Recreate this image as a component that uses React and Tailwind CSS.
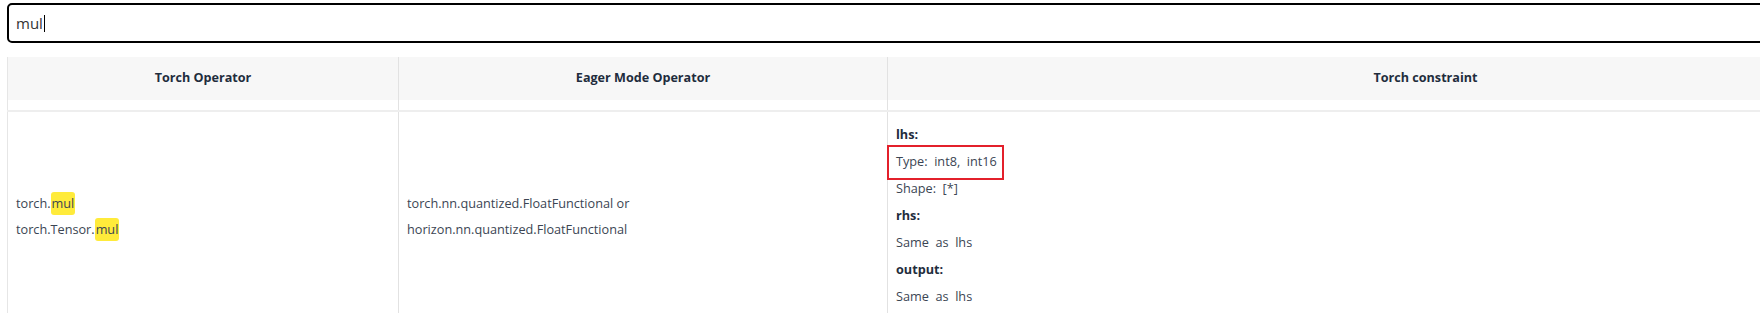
import React from 'react';

const font = { fontFamily: '"Open Sans", "Noto Sans", sans-serif' };

function Mark({ children }) {
  return (
    <span className="inline-block rounded-[3px] bg-[#ffeb3b] px-[1px] leading-[23px]">{children}</span>
  );
}

function HeaderCell({ children, first }) {
  return (
    <div className={`pb-[10px] ${first ? 'border-l border-[#e6e6e6]' : 'border-l border-[#e2e2e2]'}`}>
      <div className="flex h-[43px] items-center justify-center bg-[#f7f7f7] text-[12.6px] font-bold text-[#1f2d3d]">
        {children}
      </div>
    </div>
  );
}

export default function App() {
  return (
    <div className="h-screen w-screen overflow-hidden bg-white text-[#3b4553]" style={font}>
      <div className="w-[1980px] pl-[7px] pt-[3px]">
        {/* search box */}
        <div className="flex h-[40px] items-center rounded-[5px] border-2 border-black pl-[7px] text-[15px] text-[#333]">
          <span>mul</span>
          <span className="ml-[1px] inline-block h-[17px] w-[1px] bg-black" />
        </div>

        {/* table */}
        <div className="mt-[14px] w-[1956px]">
          <div className="grid grid-cols-[391px_489px_1076px] border-b-2 border-[#eeeeee]">
            <HeaderCell first>Torch Operator</HeaderCell>
            <HeaderCell>Eager Mode Operator</HeaderCell>
            <HeaderCell>Torch constraint</HeaderCell>
          </div>

          <div className="grid grid-cols-[391px_489px_1076px] text-[12.7px]">
            <div className="flex flex-col justify-center border-l border-[#e6e6e6] pl-[8px] leading-[26px]">
              <div>torch.<Mark>mul</Mark></div>
              <div>torch.Tensor.<Mark>mul</Mark></div>
            </div>
            <div className="flex flex-col justify-center border-l border-[#e2e2e2] pl-[8px] leading-[26px]">
              <div>torch.nn.quantized.FloatFunctional or</div>
              <div>horizon.nn.quantized.FloatFunctional</div>
            </div>
            <div className="flex flex-col justify-center border-l border-[#e2e2e2] py-[9px] pl-[8px] leading-[27px] whitespace-pre">
              <div className="font-bold text-[#1f2d3d]">lhs:</div>
              <div>
                <span className="relative inline-block">
                  Type:  int8,  int16
                  <span className="absolute -bottom-[5px] -left-[9px] -right-[7px] -top-[3px] border-2 border-[#e3202b]" />
                </span>
              </div>
              <div>Shape:  [*]</div>
              <div className="font-bold text-[#1f2d3d]">rhs:</div>
              <div>Same  as  lhs</div>
              <div className="font-bold text-[#1f2d3d]">output:</div>
              <div>Same  as  lhs</div>
            </div>
          </div>
        </div>
      </div>
    </div>
  );
}
